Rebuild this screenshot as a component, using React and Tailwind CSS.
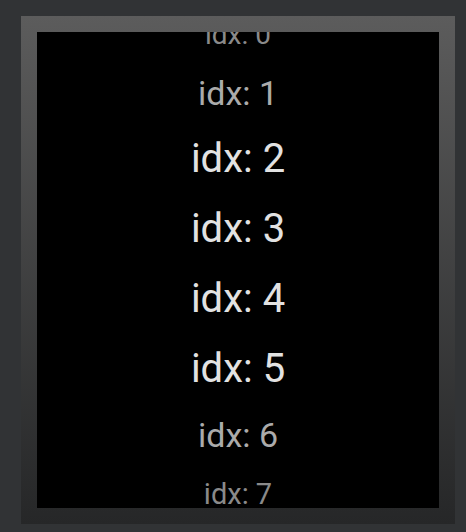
export default function App() {
  const rows = [
    { t: "idx: 0", h: "h-[54px] leading-[54px] text-[28px] text-[#8a8a8a] -mt-[24px]" },
    { t: "idx: 1", h: "h-[62px] leading-[62px] text-[34px] text-[#ababab]" },
    { t: "idx: 2", h: "h-[70px] leading-[70px] text-[40px] text-[#e2e2e2]" },
    { t: "idx: 3", h: "h-[70px] leading-[70px] text-[40px] text-[#e2e2e2]" },
    { t: "idx: 4", h: "h-[70px] leading-[70px] text-[40px] text-[#e2e2e2]" },
    { t: "idx: 5", h: "h-[70px] leading-[70px] text-[40px] text-[#e2e2e2]" },
    { t: "idx: 6", h: "h-[62px] leading-[62px] text-[34px] text-[#ababab]" },
    { t: "idx: 7", h: "h-[56px] leading-[56px] text-[29px] text-[#8a8a8a]" },
  ];
  return (
    <div className="w-[466px] h-[532px] bg-[#313335] pt-[16px] pl-[21px] pr-[11px]" style={{ fontFamily: "Roboto, 'Liberation Sans', sans-serif" }}>
      <div className="h-[508px] p-4 bg-gradient-to-b from-[#5c5c5c] to-[#262728]">
        <div className="h-full bg-black overflow-hidden flex flex-col items-center">
          {rows.map((r) => (
            <div key={r.t} className={`shrink-0 whitespace-nowrap ${r.h}`}>{r.t}</div>
          ))}
        </div>
      </div>
    </div>
  );
}
